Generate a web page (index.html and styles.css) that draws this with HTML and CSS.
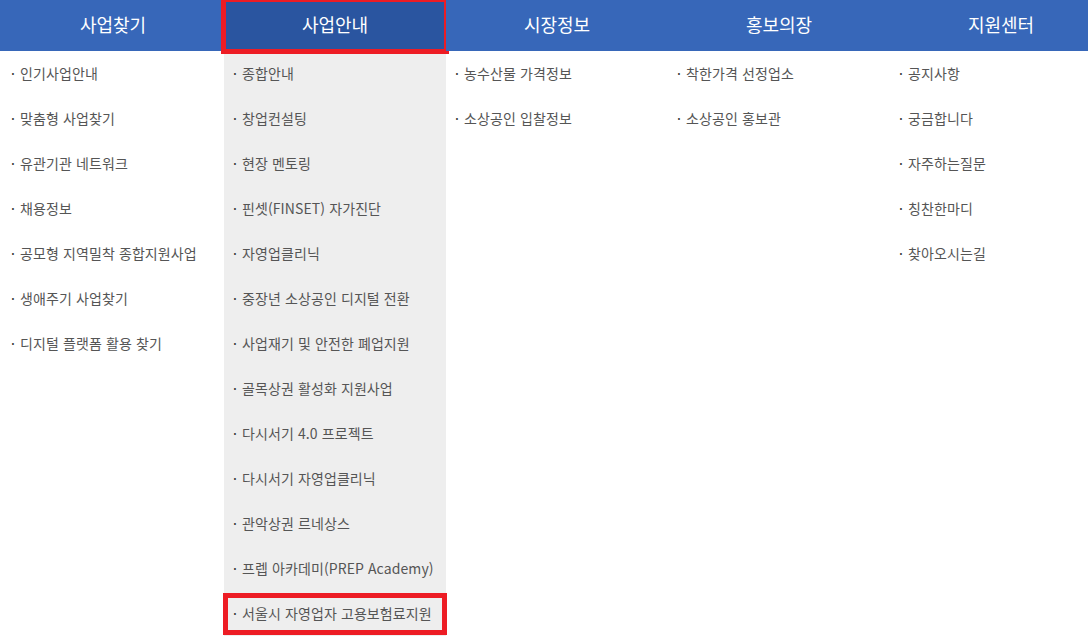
FILE: index.html
```html
<!DOCTYPE html>
<html lang="ko">
<head>
  <meta charset="UTF-8">
  <title>소상공인 지원 메뉴</title>
  <link rel="stylesheet" href="styles.css">
</head>
<body>

<div class="gnb">
  <div class="menu">
    <div class="col">
      <div class="top">사업찾기</div>
      <ul class="sub">
        <li>인기사업안내</li>
        <li>맞춤형 사업찾기</li>
        <li>유관기관 네트워크</li>
        <li>채용정보</li>
        <li>공모형 지역밀착 종합지원사업</li>
        <li>생애주기 사업찾기</li>
        <li>디지털 플랫폼 활용 찾기</li>
      </ul>
    </div>

    <div class="col on">
      <div class="top mark">사업안내</div>
      <ul class="sub">
        <li>종합안내</li>
        <li>창업컨설팅</li>
        <li>현장 멘토링</li>
        <li>핀셋(FINSET) 자가진단</li>
        <li>자영업클리닉</li>
        <li>중장년 소상공인 디지털 전환</li>
        <li>사업재기 및 안전한 폐업지원</li>
        <li>골목상권 활성화 지원사업</li>
        <li>다시서기 4.0 프로젝트</li>
        <li>다시서기 자영업클리닉</li>
        <li>관악상권 르네상스</li>
        <li>프렙 아카데미(PREP Academy)</li>
        <li class="mark">서울시 자영업자 고용보험료지원</li>
      </ul>
    </div>

    <div class="col">
      <div class="top">시장정보</div>
      <ul class="sub">
        <li>농수산물 가격정보</li>
        <li>소상공인 입찰정보</li>
      </ul>
    </div>

    <div class="col">
      <div class="top">홍보의장</div>
      <ul class="sub">
        <li>착한가격 선정업소</li>
        <li>소상공인 홍보관</li>
      </ul>
    </div>

    <div class="col">
      <div class="top">지원센터</div>
      <ul class="sub">
        <li>공지사항</li>
        <li>궁금합니다</li>
        <li>자주하는질문</li>
        <li>칭찬한마디</li>
        <li>찾아오시는길</li>
      </ul>
    </div>
  </div>
</div>

</body>
</html>
```

FILE: styles.css
```css
body {
  margin: 0;
  font-family: "Noto Sans CJK KR", "Noto Sans", sans-serif;
  background-color: #fff;
  overflow: hidden;
}

.gnb {
  width: 100%;
  height: 636px;
  background: linear-gradient(#3767b9 0, #3767b9 51px, #fff 51px);
}

.menu {
  display: flex;
  margin-left: 2px;
  width: 1110px;
  height: 100%;
}

.col {
  width: 222px;
  flex-shrink: 0;
}

.col.on {
  background-color: #eeeeee;
}

.top {
  height: 51px;
  line-height: 49px;
  text-align: center;
  color: #fff;
  font-size: 18px;
  background-color: #3767b9;
}

.col.on .top {
  background-color: #2a55a0;
}

.sub {
  list-style: none;
  margin: 0;
  padding: 0;
}

.sub li {
  height: 45px;
  line-height: 45px;
  padding-left: 9px;
  font-size: 14px;
  color: #555;
  letter-spacing: 0.1px;
  white-space: nowrap;
}

.sub li::before {
  content: "·";
  display: inline-block;
  width: 9px;
  color: #333;
}

.top.mark {
  outline: 5px solid #ed1c24;
  outline-offset: -2px;
}

.sub li.mark {
  outline: 5px solid #ed1c24;
  outline-offset: -4px;
  height: 40px;
  line-height: 38px;
  margin-top: 3px;
}
```
